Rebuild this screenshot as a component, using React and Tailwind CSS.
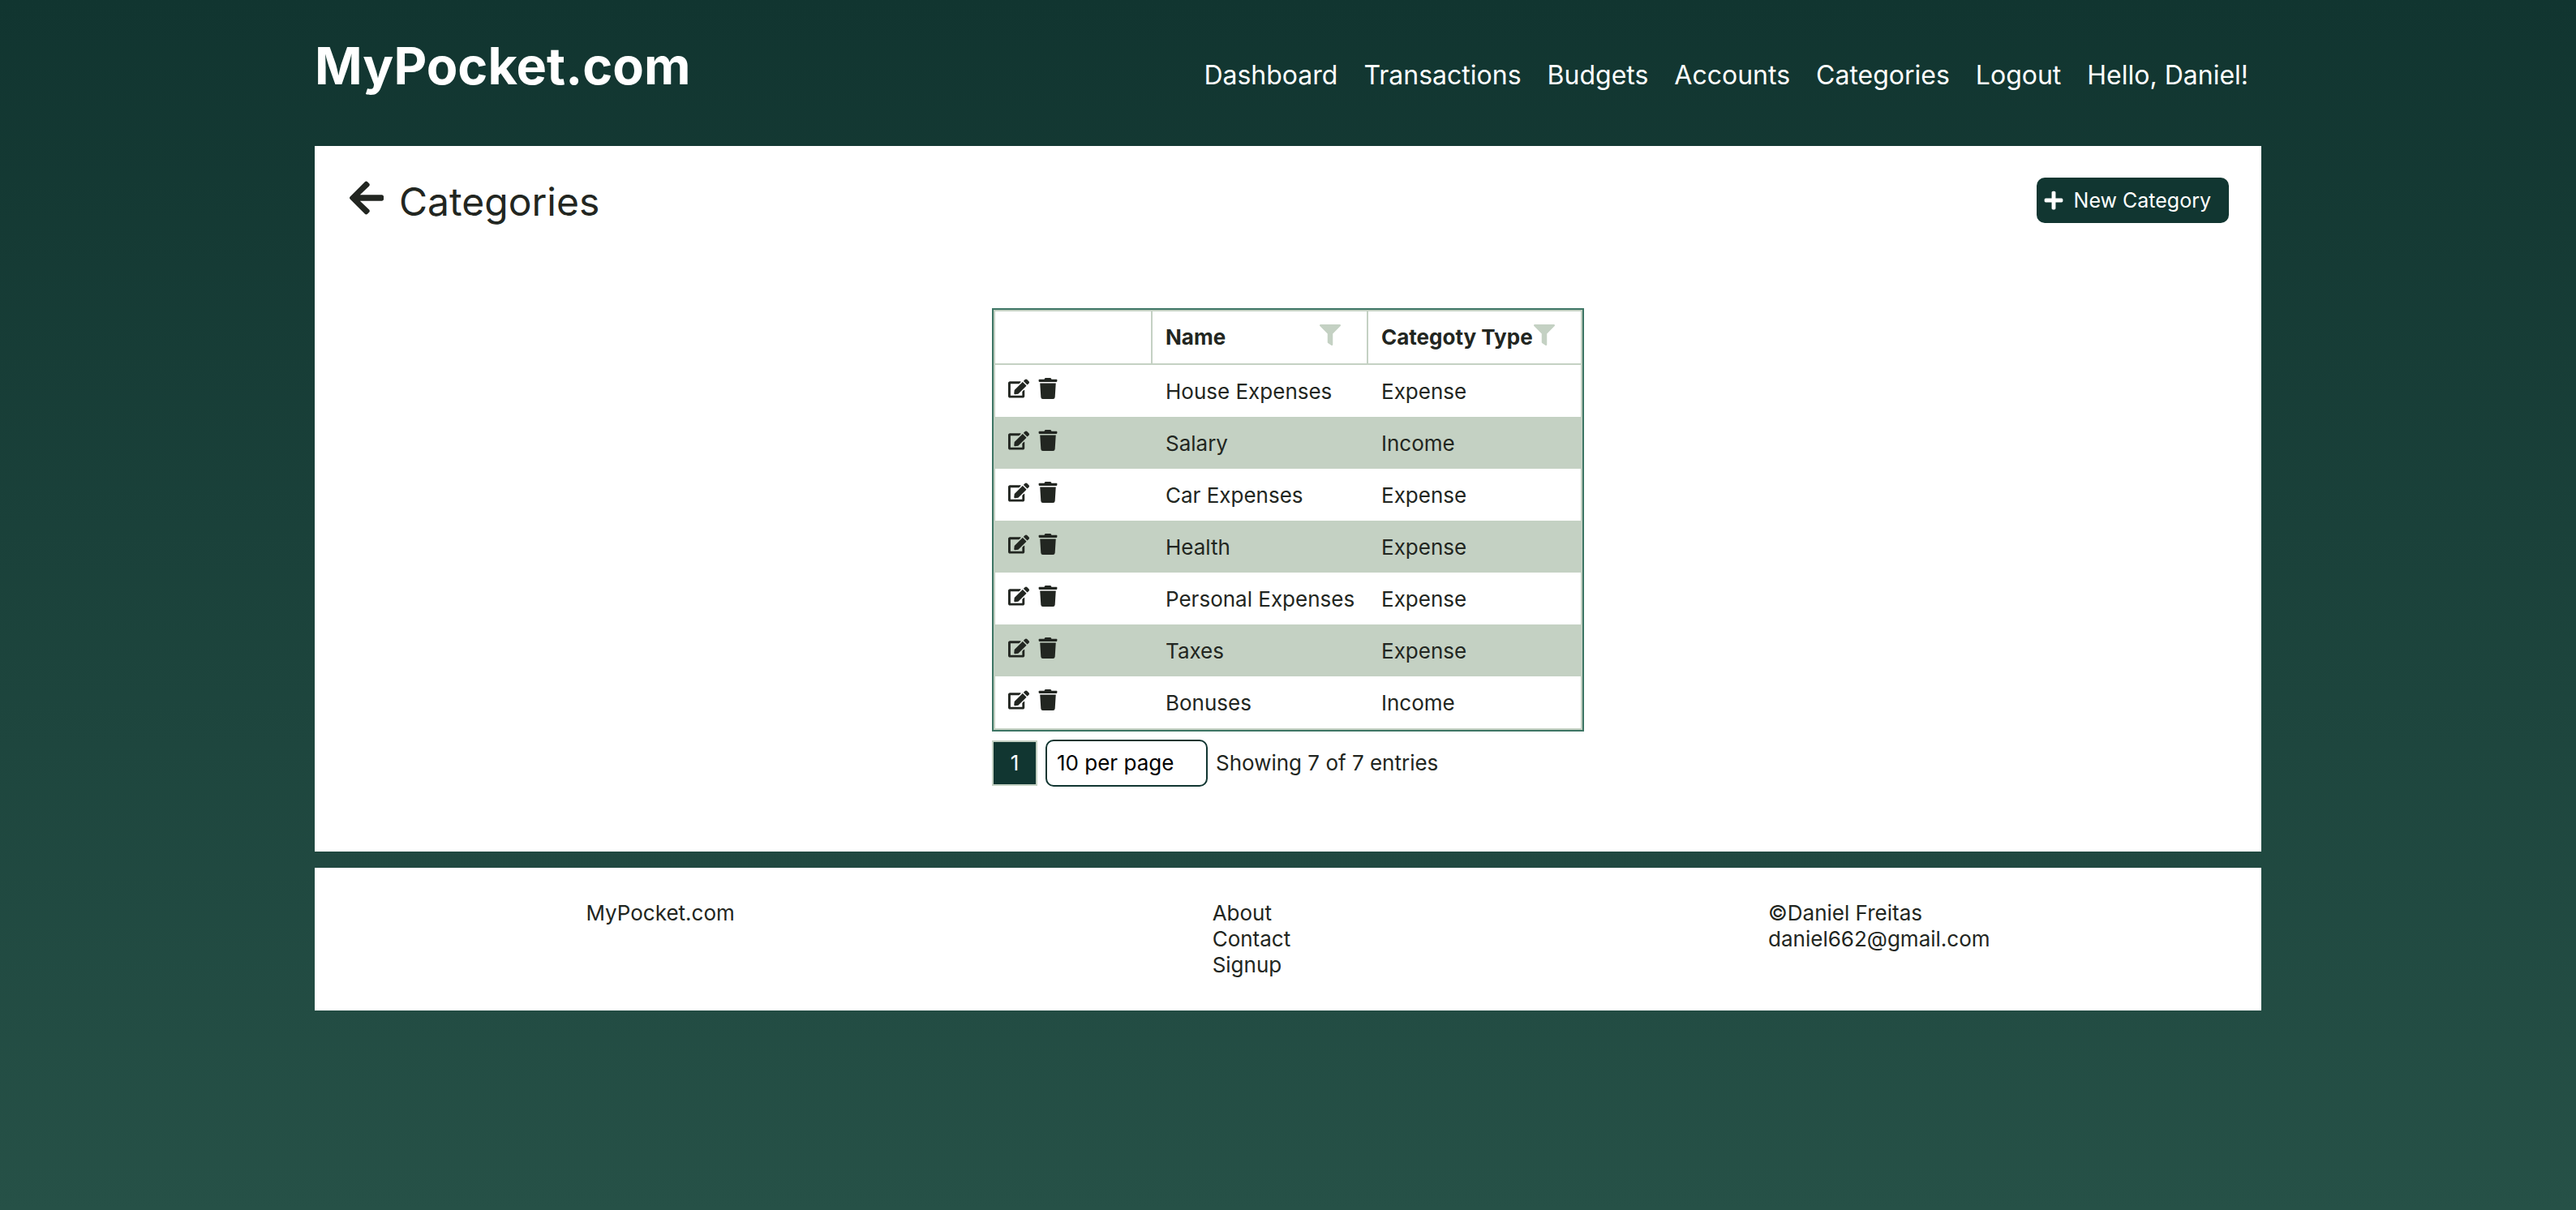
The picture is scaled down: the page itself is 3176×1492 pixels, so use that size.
import { FaArrowLeft, FaEdit, FaFilter, FaPlus, FaTrash } from "react-icons/fa";

const navLinks = ["Dashboard", "Transactions", "Budgets", "Accounts", "Categories", "Logout"];

const categories = [
  { name: "House Expenses", type: "Expense" },
  { name: "Salary", type: "Income" },
  { name: "Car Expenses", type: "Expense" },
  { name: "Health", type: "Expense" },
  { name: "Personal Expenses", type: "Expense" },
  { name: "Taxes", type: "Expense" },
  { name: "Bonuses", type: "Income" },
];

function Header() {
  return (
    <header className="flex h-[180px] items-baseline justify-between pt-[41px] pr-4 text-white">
      <a href="#" className="text-[63px] leading-[80px] font-bold">MyPocket.com</a>
      <nav className="flex gap-8 text-[32px] leading-10">
        {navLinks.map((label) => (
          <a key={label} href="#">{label}</a>
        ))}
        <span>Hello, Daniel!</span>
      </nav>
    </header>
  );
}

function ColumnTitle({ title }) {
  return (
    <th scope="col" className="h-[66px] border-b-2 border-l-2 border-[#c4d1c3] p-0 pl-4 pr-8 text-left font-bold">
      <div className="flex items-center justify-between">
        {title}
        <button type="button" aria-label={`Filter by ${title}`} className="pb-1.5 text-[#c4d1c3]">
          <FaFilter />
        </button>
      </div>
    </th>
  );
}

function CategoryTable() {
  return (
    <div className="border-2 border-[#3d7564]">
      <table className="w-full table-fixed border-separate border-spacing-0 border-2 border-[#c4d1c3]">
        <colgroup>
          <col className="w-48" />
          <col className="w-[266px]" />
          <col className="w-[264px]" />
        </colgroup>
        <thead>
          <tr>
            <td className="border-b-2 border-[#c4d1c3]" />
            <ColumnTitle title="Name" />
            <ColumnTitle title="Categoty Type" />
          </tr>
        </thead>
        <tbody>
          {categories.map(({ name, type }) => (
            <tr key={name} className="even:bg-[#c4d1c3]">
              <td className="h-16 p-0 pl-4">
                <div className="flex gap-2.5 pb-1.5">
                  <button type="button" aria-label={`Edit ${name}`}><FaEdit /></button>
                  <button type="button" aria-label={`Delete ${name}`}><FaTrash /></button>
                </div>
              </td>
              <td className="border-l-2 border-transparent p-0 pt-0.5 pl-4 whitespace-nowrap">{name}</td>
              <td className="border-l-2 border-transparent p-0 pt-0.5 pl-4">{type}</td>
            </tr>
          ))}
        </tbody>
      </table>
    </div>
  );
}

function Pagination() {
  return (
    <div className="mt-2.5 flex items-center gap-2.5">
      <button type="button" aria-current="page" className="size-14 border-2 border-[#c4d1c3] bg-[#113631] text-white">
        1
      </button>
      <select
        aria-label="Entries per page"
        className="h-[58px] w-[200px] appearance-none rounded-[10px] border-2 border-[#113631] bg-white px-3 text-black"
      >
        <option>10 per page</option>
      </select>
      <p>Showing 7 of 7 entries</p>
    </div>
  );
}

export default function App() {
  return (
    <div className="min-h-screen bg-linear-to-b from-[#113530] to-[#265147] font-['Inter',sans-serif] text-[26px] leading-8 text-[#222621]">
      <div className="mx-auto max-w-[2400px]">
        <Header />
        <main className="bg-white px-10 pt-[39px] pb-20">
          <div className="flex items-start justify-between">
            <div className="flex items-center gap-4 text-[48px] leading-[60px]">
              <a href="#" aria-label="Back" className="pb-2.5"><FaArrowLeft /></a>
              <h1>Categories</h1>
            </div>
            <button type="button" className="flex h-14 items-center gap-3 rounded-[10px] bg-[#113631] pl-2 pr-5.5 text-[25px] text-white">
              <FaPlus className="size-[26px]" />
              New Category
            </button>
          </div>
          <div className="mx-auto mt-[101px] w-[730px]">
            <CategoryTable />
            <Pagination />
          </div>
        </main>
        <footer className="mt-5 flex justify-around bg-white p-10">
          <p>MyPocket.com</p>
          <nav className="flex flex-col">
            <a href="#">About</a>
            <a href="#">Contact</a>
            <a href="#">Signup</a>
          </nav>
          <address className="not-italic">
            ©Daniel Freitas
            <br />
            <a href="mailto:daniel662@gmail.com">daniel662@gmail.com</a>
          </address>
        </footer>
      </div>
    </div>
  );
}
